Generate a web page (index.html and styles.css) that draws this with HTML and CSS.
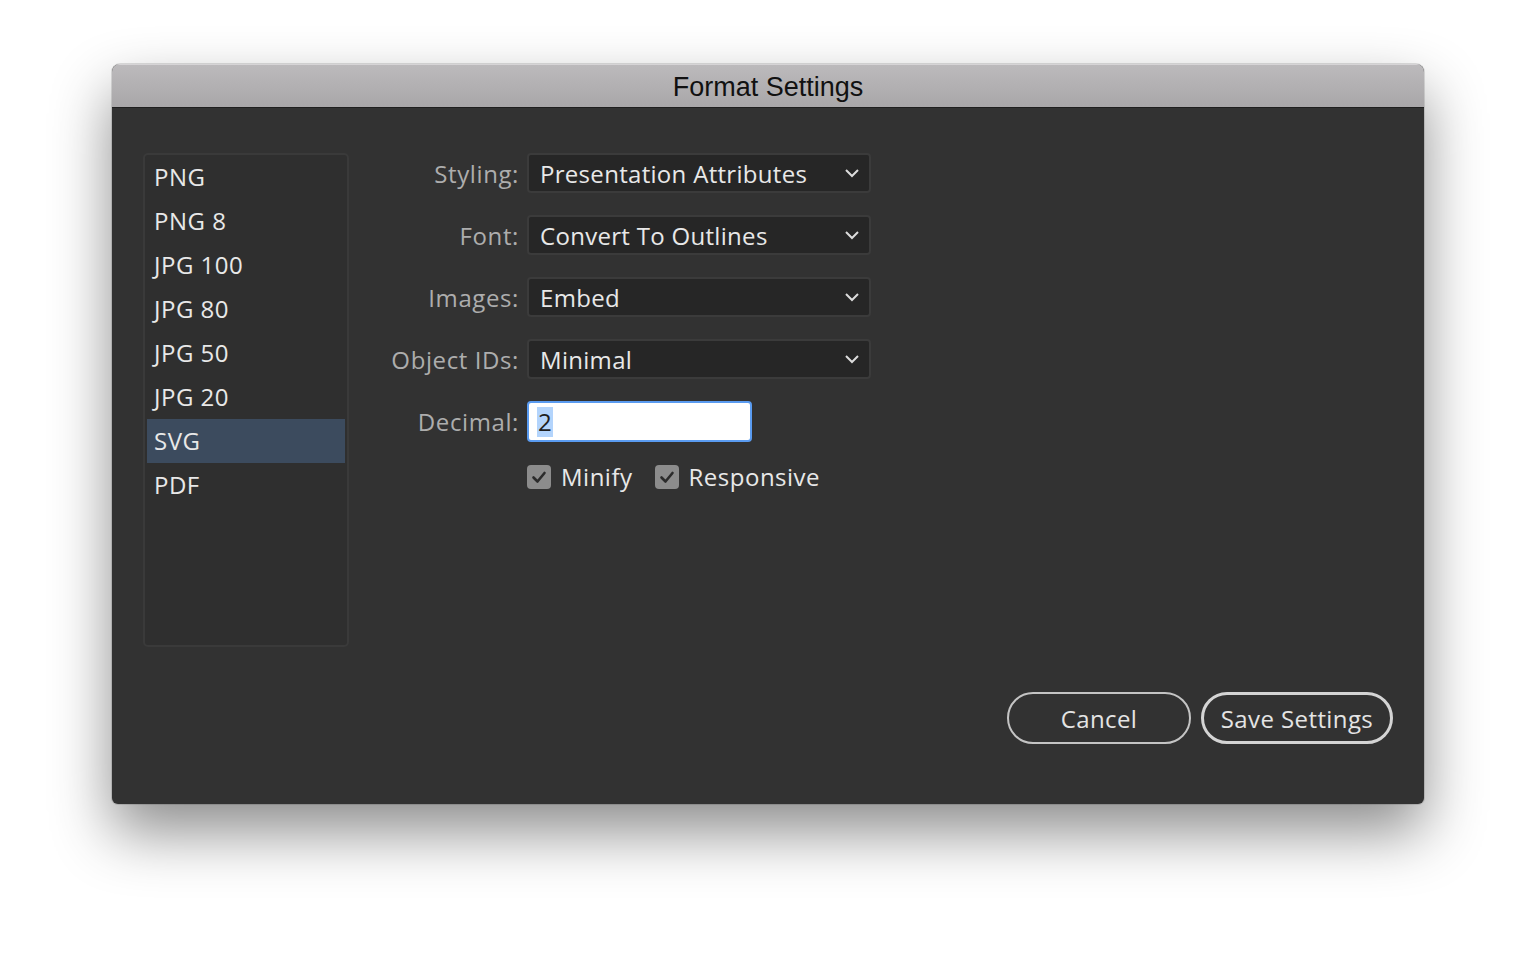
FILE: index.html
```html
<!DOCTYPE html>
<html>
<head>
<meta charset="utf-8">
<title>Format Settings</title>
<link rel="stylesheet" href="styles.css">
</head>
<body>
<div class="window">
  <div class="titlebar">Format Settings</div>
  <div class="content">
    <div class="main">
      <ul class="formats">
        <li>PNG</li>
        <li>PNG 8</li>
        <li>JPG 100</li>
        <li>JPG 80</li>
        <li>JPG 50</li>
        <li>JPG 20</li>
        <li class="selected">SVG</li>
        <li>PDF</li>
      </ul>
      <div class="form">
        <div class="row">
          <span class="label">Styling:</span>
          <div class="select"><span>Presentation Attributes</span><svg class="chev" width="16" height="10" viewBox="0 0 16 10"><path d="M2 2 L8 8 L14 2" fill="none" stroke="#dcdcdc" stroke-width="2"/></svg></div>
        </div>
        <div class="row">
          <span class="label">Font:</span>
          <div class="select"><span>Convert To Outlines</span><svg class="chev" width="16" height="10" viewBox="0 0 16 10"><path d="M2 2 L8 8 L14 2" fill="none" stroke="#dcdcdc" stroke-width="2"/></svg></div>
        </div>
        <div class="row">
          <span class="label">Images:</span>
          <div class="select"><span>Embed</span><svg class="chev" width="16" height="10" viewBox="0 0 16 10"><path d="M2 2 L8 8 L14 2" fill="none" stroke="#dcdcdc" stroke-width="2"/></svg></div>
        </div>
        <div class="row">
          <span class="label">Object IDs:</span>
          <div class="select"><span>Minimal</span><svg class="chev" width="16" height="10" viewBox="0 0 16 10"><path d="M2 2 L8 8 L14 2" fill="none" stroke="#dcdcdc" stroke-width="2"/></svg></div>
        </div>
        <div class="row">
          <span class="label">Decimal:</span>
          <div class="input"><span class="sel">2</span></div>
        </div>
        <div class="row checks">
          <span class="label"></span>
          <div class="checkrow">
            <label class="check"><span class="box"><svg width="24" height="24" viewBox="0 0 24 24"><path d="M6.5 12.5 L10.5 16.5 L17.5 8" fill="none" stroke="#2b2b2b" stroke-width="2.6" stroke-linecap="round" stroke-linejoin="round"/></svg></span>Minify</label>
            <label class="check"><span class="box"><svg width="24" height="24" viewBox="0 0 24 24"><path d="M6.5 12.5 L10.5 16.5 L17.5 8" fill="none" stroke="#2b2b2b" stroke-width="2.6" stroke-linecap="round" stroke-linejoin="round"/></svg></span>Responsive</label>
          </div>
        </div>
      </div>
    </div>
    <div class="buttons">
      <button class="btn">Cancel</button>
      <button class="btn primary">Save Settings</button>
    </div>
  </div>
</div>
</body>
</html>
```
FILE: styles.css
```css
html, body {
  margin: 0;
  padding: 0;
  background: #ffffff;
}
body {
  width: 1536px;
  height: 964px;
  padding: 64px 0 0 112px;
  box-sizing: border-box;
  font-family: "Open Sans", "Noto Sans", sans-serif;
  overflow: hidden;
}
.window {
  width: 1312px;
  height: 740px;
  border-radius: 8px 8px 6px 6px;
  background: #323232;
  box-shadow: 0 28px 60px rgba(0,0,0,0.45), 0 0 0 1px rgba(0,0,0,0.12);
  display: flex;
  flex-direction: column;
  overflow: hidden;
}
.titlebar {
  height: 44px;
  box-sizing: border-box;
  background: linear-gradient(#bcbabc, #a9a7a9);
  border-bottom: 1px solid #1f1f1f;
  box-shadow: inset 0 1px 0 #d6d4d6;
  font-family: "Liberation Sans", Arial, sans-serif;
  font-size: 27px;
  color: #111;
  display: flex;
  align-items: center;
  justify-content: center;
  padding-top: 3px;
}
.content {
  flex: 1;
  display: flex;
  flex-direction: column;
  padding: 45px 31px 0 31px;
}
.main {
  display: flex;
}
.formats {
  list-style: none;
  margin: 0;
  padding: 0 2px;
  width: 206px;
  height: 494px;
  box-sizing: border-box;
  border: 2px solid #3a3a3a;
  border-radius: 5px;
  background: #2f2f2f;
}
.formats li {
  height: 44px;
  line-height: 44px;
  padding-left: 7px;
  font-size: 24px;
  letter-spacing: 0.5px;
  color: #e8e8e8;
}
.formats li.selected {
  background: #3c4b5e;
}
.form {
  margin-left: 20px;
  display: flex;
  flex-direction: column;
  gap: 22px;
}
.row {
  display: flex;
  align-items: center;
  gap: 8px;
}
.label {
  width: 150px;
  text-align: right;
  font-size: 24px;
  letter-spacing: 0.6px;
  color: #adadad;
}
.select {
  width: 344px;
  height: 40px;
  box-sizing: border-box;
  border: 2px solid #3b3b3b;
  border-radius: 4px;
  background: #262626;
  display: flex;
  align-items: center;
  justify-content: space-between;
  padding: 0 9px 0 11px;
  font-size: 24px;
  letter-spacing: 0.3px;
  color: #e8e8e8;
}
.chev {
  display: block;
}
.input {
  width: 225px;
  height: 41px;
  box-sizing: border-box;
  border: 2px solid #5a9bf0;
  border-radius: 4px;
  background: #ffffff;
  display: flex;
  align-items: center;
  padding-left: 8px;
  font-size: 24px;
  color: #1e1e1e;
}
.sel {
  background: #b3d4fc;
  padding: 0 1px;
  line-height: 30px;
}
.checks {
  margin-top: -4px;
}
.checkrow {
  display: flex;
  gap: 22px;
}
.check {
  display: flex;
  align-items: center;
  gap: 10px;
  font-size: 24px;
  letter-spacing: 0.5px;
  color: #e8e8e8;
}
.box {
  width: 24px;
  height: 24px;
  border-radius: 4px;
  background: #8c8c8c;
  display: block;
}
.box svg {
  display: block;
}
.buttons {
  margin-top: 45px;
  display: flex;
  justify-content: flex-end;
  gap: 10px;
}
.btn {
  height: 52px;
  border-radius: 26px;
  background: transparent;
  border: 2px solid #c4c4c4;
  color: #e4e4e4;
  font-family: "Open Sans", "Noto Sans", sans-serif;
  font-size: 24px;
  letter-spacing: 0.4px;
  width: 184px;
  padding: 0;
}
.btn.primary {
  width: 192px;
  border: 3px solid #d4d4d4;
}
```
